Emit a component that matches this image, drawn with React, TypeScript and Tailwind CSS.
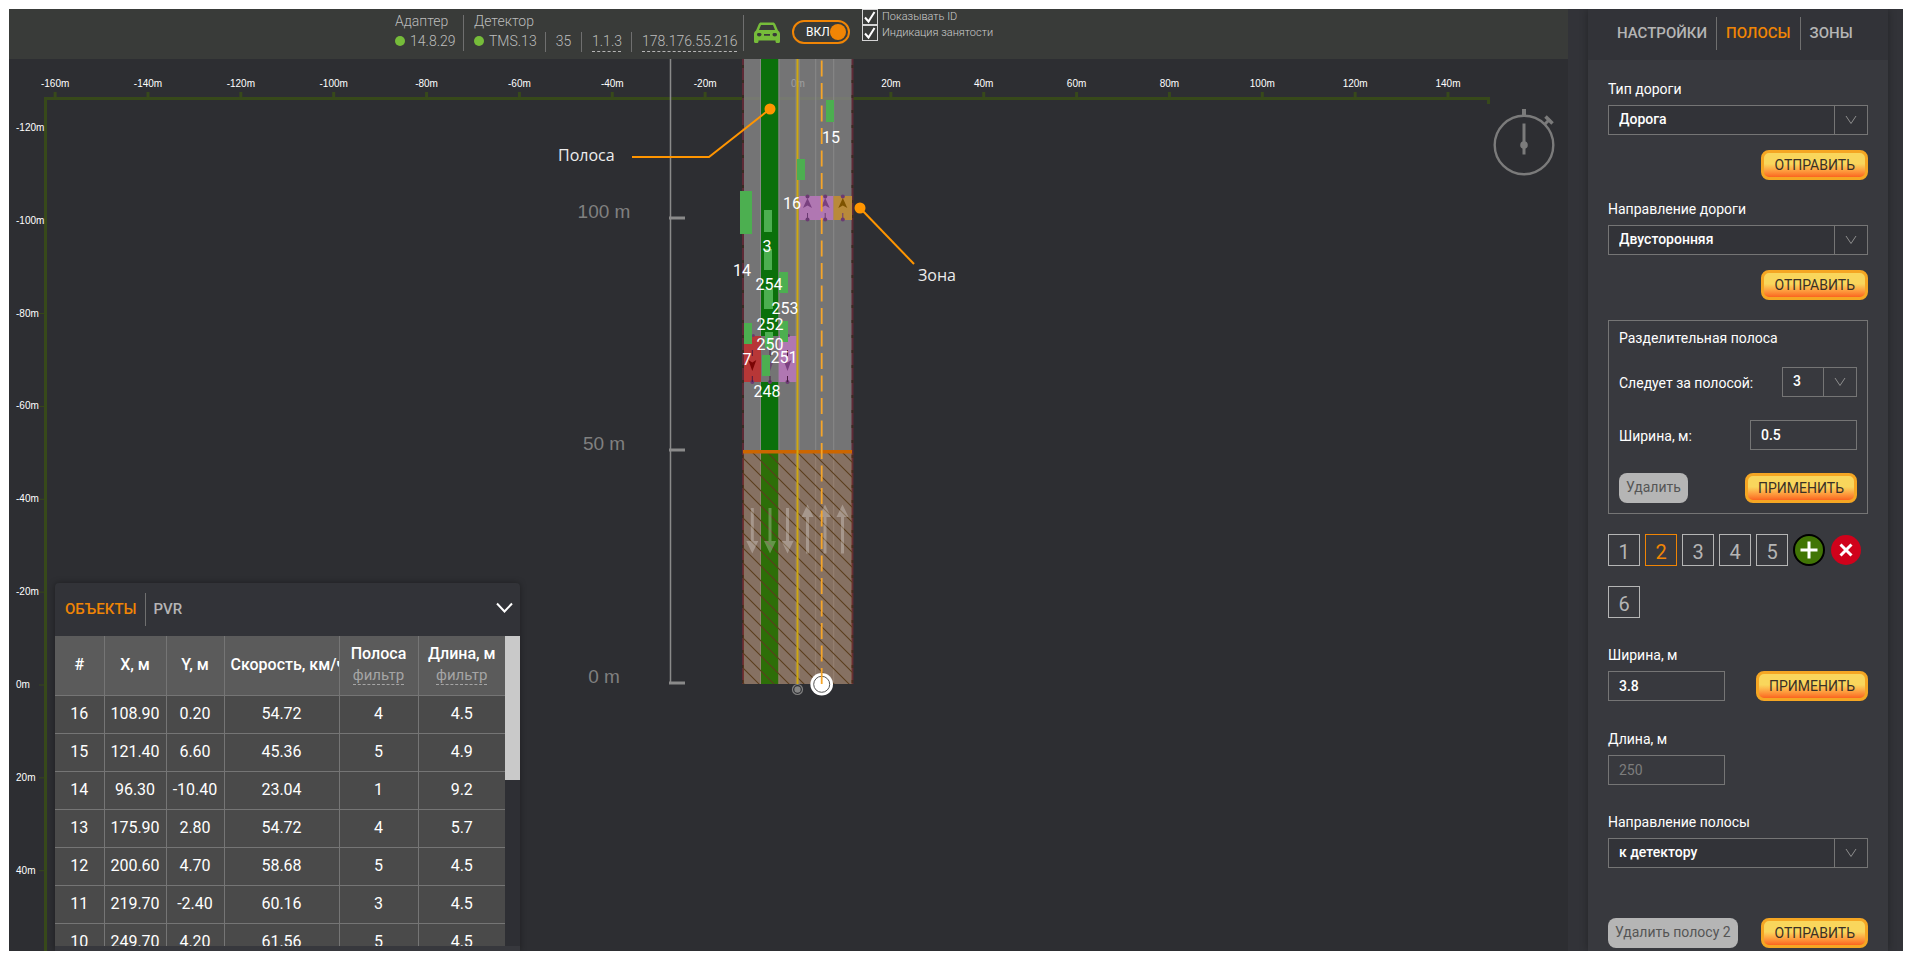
import { useState } from "react";
import type { ReactNode } from "react";

const PX_PER_10M = 46.43;
const ZERO_X = 798;
const ZERO_Y = 685;

const xTicks = [-160, -140, -120, -100, -80, -60, -40, -20, 0, 20, 40, 60, 80, 100, 120, 140];
const yTicks = [-120, -100, -80, -60, -40, -20, 0, 20, 40];

const distances = [
  { label: "100 m", y: 218 },
  { label: "50 m", y: 450 },
  { label: "0 m", y: 683 },
];

// detected vehicles on the road
const vehicles = [
  { x: 826, y: 100, w: 8, h: 22 },
  { x: 797, y: 159, w: 8, h: 21 },
  { x: 740, y: 191, w: 12, h: 43 },
  { x: 764, y: 210, w: 8, h: 22 },
  { x: 764, y: 249, w: 8, h: 21 },
  { x: 779, y: 272, w: 9, h: 21 },
  { x: 764, y: 289, w: 9, h: 20 },
  { x: 744, y: 323, w: 8, h: 21 },
  { x: 765, y: 332, w: 8, h: 16 },
  { x: 780, y: 321, w: 8, h: 21 },
  { x: 762, y: 355, w: 8, h: 21 },
];

const vehicleIds = [
  { id: "15", x: 831, y: 143 },
  { id: "16", x: 792, y: 209 },
  { id: "3", x: 767, y: 252 },
  { id: "14", x: 742, y: 276 },
  { id: "254", x: 769, y: 290 },
  { id: "253", x: 785, y: 314 },
  { id: "252", x: 770, y: 330 },
  { id: "250", x: 770, y: 350 },
  { id: "7", x: 747, y: 365 },
  { id: "251", x: 784, y: 363 },
  { id: "248", x: 767, y: 397 },
];

const rows = [
  ["16", "108.90", "0.20", "54.72", "4", "4.5"],
  ["15", "121.40", "6.60", "45.36", "5", "4.9"],
  ["14", "96.30", "-10.40", "23.04", "1", "9.2"],
  ["13", "175.90", "2.80", "54.72", "4", "5.7"],
  ["12", "200.60", "4.70", "58.68", "5", "4.5"],
  ["11", "219.70", "-2.40", "60.16", "3", "4.5"],
  ["10", "249.70", "4.20", "61.56", "5", "4.5"],
];

const columns = [
  { title: "#", width: "w-[49px]" },
  { title: "X, м", width: "w-[62px]" },
  { title: "Y, м", width: "w-[58px]" },
  { title: "Скорость, км/ч", width: "w-[115px]" },
  { title: "Полоса", width: "w-[79px]", filter: true },
  { title: "Длина, м", width: "w-[87px]", filter: true },
];

function Ruler() {
  return (
    <g>
      <g stroke="#37491a" fill="none">
        <path d="M45.5 960V98.5H1488.5V104" strokeWidth="3" />
        {xTicks.map((m) => (
          <path key={m} d={`M${ZERO_X + (m / 10) * PX_PER_10M} 92v6`} strokeWidth="3" />
        ))}
        {yTicks
          .filter((m) => Math.abs(m) < 100)
          .map((m) => (
            <path key={m} d={`M39 ${ZERO_Y + (m / 10) * PX_PER_10M}h6`} strokeWidth="1" />
          ))}
      </g>
      <g className="fill-white font-['Liberation_Sans',Arial,sans-serif] text-[10px]">
        {xTicks.map((m) => (
          <text key={m} x={ZERO_X + (m / 10) * PX_PER_10M} y="87" textAnchor="middle">
            {m}m
          </text>
        ))}
        {yTicks.map((m) => (
          <text key={m} x="16" y={ZERO_Y + (m / 10) * PX_PER_10M + 3}>
            {m}m
          </text>
        ))}
      </g>
    </g>
  );
}

function ScaleBar() {
  return (
    <g>
      <path d="M670.5 59V683" stroke="#8a8a8a" strokeWidth="1.5" />
      {distances.map((d) => (
        <g key={d.label}>
          <path d={`M669 ${d.y}h16`} stroke="#8a8a8a" strokeWidth="3" />
          <text
            x="604"
            y={d.y}
            textAnchor="middle"
            className="fill-[#808080] font-['Liberation_Sans',Arial,sans-serif] text-[19px]"
          >
            {d.label}
          </text>
        </g>
      ))}
    </g>
  );
}

function Road() {
  return (
    <g>
      <rect x="743" y="50" width="109.5" height="634" fill="#868686" fillOpacity="0.8" />
      <rect x="761" y="50" width="17.5" height="634" fill="#0a700a" />
      <path d="M743 50V684M852.5 50V684" stroke="#5e2a36" strokeWidth="2" />
      <path d="M743 50V684M852.5 50V684" stroke="#3c2a22" strokeWidth="2" strokeDasharray="3 12" />
      <path
        d="M760.5 50V684M779 50V684M796 50V684M799.2 50V684M815.7 50V684M833.7 50V684"
        stroke="#888888"
        strokeWidth="1"
      />

      {/* zones */}
      <rect x="744" y="336" width="17.5" height="46" fill="#b73737" />
      <rect x="761" y="336" width="17.5" height="46" fill="#747474" />
      <rect x="778.5" y="336" width="18" height="46" fill="#b077b2" />
      <rect x="799" y="196" width="34.5" height="24" fill="#b077b2" />
      <rect x="833.5" y="196" width="18.5" height="24" fill="#b98a3a" />
      {[
        { x: 807.5, c: "#7a4080" },
        { x: 825.2, c: "#7a4080" },
        { x: 842.8, c: "#7d5200" },
      ].map((a) => (
        <g key={a.x}>
          <path d={`M${a.x} 198l4.5 10l-4.5 -2.5l-4.5 2.5z`} fill={a.c} />
          <circle cx={a.x} cy="196.5" r="2" fill="#6b3a72" />
          <circle cx={a.x} cy="219.5" r="2" fill="#6b3a72" />
          <path d={`M${a.x} 213v6`} stroke="#6b3a72" />
        </g>
      ))}
      {[
        { x: 752.3, c: "#7a0505" },
        { x: 770, c: "#6b4a72" },
        { x: 787.5, c: "#7a4080" },
      ].map((a) => (
        <g key={a.x}>
          <path d={`M${a.x} 371l4 -11l-4 2.5l-4 -2.5z`} fill={a.c} />
          <circle cx={a.x + 1} cy="335.5" r="1.5" fill="#6b3a72" />
          <circle cx={a.x} cy="382" r="2" fill="#6b3a72" />
          <path d={`M${a.x} 350v6M${a.x} 376v6`} stroke="#4b1a42" />
        </g>
      ))}

      {/* blind area */}
      <rect x="743" y="453" width="109.5" height="231" fill="#e46400" fillOpacity="0.16" />
      <rect x="743" y="453" width="109.5" height="231" fill="url(#hatch)" />
      <path d="M743 451.7H852" stroke="#cc6600" strokeWidth="3.5" />
      <g fill="#ffffff" fillOpacity="0.27">
        {[752.3, 770, 787.5].map((x) => (
          <path key={x} d={`M${x - 1.5} 508h3v33h4.5l-6 12.5l-6 -12.5h4.5z`} />
        ))}
        {[807.5, 825, 842.5].map((x) => (
          <path key={x} d={`M${x - 1.5} 553.5h3v-36.5h4.5l-6 -12.5l-6 12.5h4.5z`} />
        ))}
      </g>

      <path d="M797.5 50V684" stroke="#cfa810" strokeWidth="2" />
      <g fill="#4caf50">
        {vehicles.map((v) => (
          <rect key={`${v.x}-${v.y}`} x={v.x} y={v.y} width={v.w} height={v.h} />
        ))}
      </g>

      <circle cx="797.5" cy="689.5" r="5" fill="#2d2e32" stroke="#808080" strokeWidth="1.2" />
      <circle cx="797.5" cy="689.5" r="3.2" fill="#858585" />
      <circle cx="821.7" cy="684.3" r="11.3" fill="#ffffff" />
      <circle cx="821.7" cy="684.3" r="8" fill="none" stroke="#555555" />
      <path d="M821.7 684V50" stroke="#f5a52a" strokeWidth="1.8" strokeDasharray="16 6.5" />

      <g className="fill-white font-['Roboto',sans-serif] text-base" textAnchor="middle">
        {vehicleIds.map((v) => (
          <text key={v.id} x={v.x} y={v.y}>
            {v.id}
          </text>
        ))}
      </g>
    </g>
  );
}

function RadarMap() {
  return (
    <svg className="absolute inset-0 h-full w-full" role="img" aria-label="Карта">
      <defs>
        <pattern id="hatch" width="15" height="15" patternUnits="userSpaceOnUse">
          <path d="M-1 -1L16 16M-1 14L1 16M14 -1L16 1" stroke="#5a3d1c" strokeWidth="1.1" />
        </pattern>
      </defs>
      <g transform="translate(-9 -59)">
        <Ruler />
        <ScaleBar />
        <Road />
        <g fill="none" stroke="#ff9500" strokeWidth="2">
          <path d="M632 157H709L770 109" />
          <path d="M860 208L914 264" />
        </g>
        <circle cx="770" cy="109" r="5.5" fill="#ff9500" />
        <circle cx="860" cy="208" r="5.5" fill="#ff9500" />
        <g className="fill-[#ececec] font-['Open_Sans','Noto_Sans',sans-serif] text-base">
          <text x="558" y="161">Полоса</text>
          <text x="918" y="281">Зона</text>
        </g>
      </g>
    </svg>
  );
}

function Stopwatch() {
  return (
    <svg
      className="absolute top-[48px] right-3 h-[70px] w-[64px]"
      viewBox="0 0 64 70"
      fill="none"
      stroke="#7b7b7b"
    >
      <circle cx="32" cy="38" r="29.3" strokeWidth="2.4" />
      <path d="M32 2v7" strokeWidth="4" />
      <path d="M32 16.5v31" strokeWidth="3" />
      <circle cx="32" cy="38" r="3.8" fill="#7b7b7b" stroke="none" />
      <path d="M53 17l5 -5" strokeWidth="3" />
      <path d="M53.5 9.5l7 7" strokeWidth="3.5" />
    </svg>
  );
}

function Check({ id, label }: { id: string; label: string }) {
  return (
    <div className="flex h-4 items-center gap-1">
      <span className="relative block h-4 w-4">
        <input
          id={id}
          type="checkbox"
          defaultChecked
          className="peer block h-4 w-4 appearance-none border border-[#d5d5d5]"
        />
        <svg
          className="pointer-events-none absolute inset-0 hidden h-4 w-4 peer-checked:block"
          viewBox="0 0 16 16"
          fill="none"
          stroke="#ffffff"
          strokeWidth="2"
        >
          <path d="M3 8.5L6.5 12.5L12.5 3" />
        </svg>
      </span>
      <label htmlFor={id} className="text-[11px] leading-4 font-light text-[#cccccc]">
        {label}
      </label>
    </div>
  );
}

function TopBar() {
  return (
    <header className="flex h-[50px] shrink-0 items-start bg-[#393b39] pl-[386px] text-sm font-light text-[#bdbdbd]">
      <div className="mt-1.5 h-9 w-[69px] border-r border-[#6f6f6f]">
        <div className="leading-3">Адаптер</div>
        <div className="mt-[5px] flex items-center gap-[5px] leading-[18px]">
          <span className="h-2.5 w-2.5 rounded-full bg-[#76bc3a]" />
          14.8.29
        </div>
      </div>
      <div className="mt-1.5 h-9 w-[280px] border-r border-[#6f6f6f] pl-2.5">
        <div className="leading-3">Детектор</div>
        <div className="mt-[5px] flex h-5 leading-[18px]">
          <span className="flex h-5 w-[72px] items-center gap-[5px] border-r border-[#6f6f6f] pb-0.5">
            <span className="h-2.5 w-2.5 rounded-full bg-[#76bc3a]" />
            TMS.13
          </span>
          <span className="w-9 border-r border-[#6f6f6f] text-center">35</span>
          <span className="w-[50px] border-r border-[#6f6f6f] px-2.5">
            <a href="#firmware" className="block h-5 border-b border-dashed border-[#b5b5b5]">
              1.1.3
            </a>
          </span>
          <a href="#address" className="ml-2.5 h-5 border-b border-dashed border-[#b5b5b5]">
            178.176.55.216
          </a>
        </div>
      </div>
      <svg className="mt-3 ml-2.5 h-[23px] w-[26px]" viewBox="0 0 26 23" fill="#76bc3a">
        <path
          fillRule="evenodd"
          d="M7 1.5h12c1 0 1.8.6 2.2 1.6L24 9.5c1.2.8 2 2 2 3.5v7.500c0 .9-.6 1.500-1.500 1.500H23c-.9 0-1.500-.6-1.500-1.500V19.500h-17V20.500c0 .9-.6 1.500-1.500 1.500H1.500C.6 22 0 21.400 0 20.500V13c0-1.500.8-2.700 2-3.500L4.800 3.100C5.200 2.100 6 1.500 7 1.500zM7 4L5 9h16L19 4zM3 13.500c0 1.200 1 2 2.200 2s2.300-.8 2.300-2-1-1.500-2.300-1.500S3 12.300 3 13.500zM18.500 13.500c0 1.200 1 2 2.300 2s2.200-.8 2.200-2-1-1.500-2.200-1.500-2.300.3-2.300 1.500zM10 13h6v1.800h-6z"
        />
      </svg>
      <button
        type="button"
        className="mt-[11px] ml-3 flex h-6 w-[58px] items-center justify-between rounded-full border-2 border-[#f08505] pr-0.5 pl-3 text-xs font-normal text-white"
      >
        ВКЛ
        <span className="h-4 w-4 shrink-0 rounded-full bg-[#f08505]" />
      </button>
      <div className="ml-3">
        <Check id="show-id" label="Показывать ID" />
        <Check id="show-busy" label="Индикация занятости" />
      </div>
    </header>
  );
}

function ObjectsPanel() {
  return (
    <section className="absolute bottom-0 left-[46px] w-[465px] overflow-hidden rounded-t bg-[#323338] shadow-[0_0_6px_rgba(0,0,0,0.35)]">
      <div className="flex h-[53px] items-center px-2.5 text-[15px] font-medium">
        <button type="button" className="text-[#f08505]">ОБЪЕКТЫ</button>
        <span className="mx-2 h-[33px] w-px bg-[#6f6f6f]" />
        <button type="button" className="text-[#b5b5b5]">PVR</button>
        <button type="button" aria-label="Свернуть" className="mr-[-3px] mb-1 ml-auto">
          <svg width="17" height="12" viewBox="0 0 17 12" fill="none" stroke="#ffffff" strokeWidth="2">
            <path d="M1 1.500L8.500 9.500L16 1.500" />
          </svg>
        </button>
      </div>
      <div className="flex h-[310px] overflow-hidden">
        <table className="w-[450px] table-fixed border-collapse self-start text-center text-base text-white">
          <thead>
            <tr className="h-[59px] bg-[#5b5b5b]">
              {columns.map((c) => (
                <th
                  key={c.title}
                  className={`${c.width} overflow-hidden border-r border-b border-[#757575] p-0 font-medium whitespace-nowrap last:border-r-0`}
                >
                  {c.filter ? (
                    <>
                      <span className="block leading-[19px]">{c.title}</span>
                      <a
                        href="#filter"
                        className="inline-block border-b border-dashed border-[#a5a5a5] text-[15px] leading-[18px] font-normal text-[#a5a5a5]"
                      >
                        фильтр
                      </a>
                    </>
                  ) : (
                    <span className={c.title.length > 8 ? "block pl-1.5 text-left" : "block"}>{c.title}</span>
                  )}
                </th>
              ))}
            </tr>
          </thead>
          <tbody>
            {rows.map((row) => (
              <tr key={row[0]} className="h-[38px] bg-[#4a4a4a]">
                {row.map((cell, i) => (
                  <td key={i} className="border-r border-b border-[#757575] p-0 last:border-r-0">
                    {cell}
                  </td>
                ))}
              </tr>
            ))}
          </tbody>
        </table>
        <div className="w-[15px] bg-[#2e2f34]">
          <div className="h-36 bg-[#c9c9c9]" />
        </div>
      </div>
      <div className="h-[5px] bg-[#37383d]" />
    </section>
  );
}

function Label({ htmlFor, children }: { htmlFor: string; children: ReactNode }) {
  return (
    <label htmlFor={htmlFor} className="mb-1.5 block h-5 leading-5">
      {children}
    </label>
  );
}

function Select({ id, options, className = "" }: { id: string; options: string[]; className?: string }) {
  return (
    <div className={`relative flex h-[30px] border border-[#757575] ${className}`}>
      <select id={id} className="w-full appearance-none pr-9 pb-0.5 pl-2.5 font-medium outline-none">
        {options.map((o) => (
          <option key={o}>{o}</option>
        ))}
      </select>
      <span className="pointer-events-none absolute inset-y-0 right-0 flex w-[33px] items-center justify-center border-l border-[#757575]">
        <svg width="12" height="10" viewBox="0 0 12 10" fill="none" stroke="#8e8e8e">
          <path d="M1 1L6 8.500L11 1" />
        </svg>
      </span>
    </div>
  );
}

function OrangeButton({ children }: { children: ReactNode }) {
  return (
    <button
      type="button"
      className="h-[30px] rounded-[8px] border-[3px] border-[#f5a623] bg-linear-to-b from-[#f9d65c] from-45% to-[#fa6420] px-2.5 leading-[22px] text-[#3a3026]"
    >
      {children}
    </button>
  );
}

function GrayButton({ children }: { children: ReactNode }) {
  return (
    <button type="button" className="h-[30px] rounded-[8px] bg-[#b5b5b5] px-[7px] pb-0.5 text-[#555555]">
      {children}
    </button>
  );
}

const inputClass = "h-[30px] border border-[#757575] px-2.5 font-medium outline-none";

function Sidebar() {
  const [lane, setLane] = useState(2);

  return (
    <aside className="w-[300px] shrink-0 overflow-hidden bg-[#38393e] text-sm text-white shadow-[0_0_8px_rgba(0,0,0,0.3)]">
      <nav className="flex h-[51px] items-center bg-[#323338] pb-0.5 pl-5 text-[15px] font-medium text-[#b5b5b5]">
        <button type="button" className="px-[9px]">НАСТРОЙКИ</button>
        <button type="button" className="h-[33px] border-x border-[#6f6f6f] px-[9px] text-[#f08505]">
          ПОЛОСЫ
        </button>
        <button type="button" className="px-[9px]">ЗОНЫ</button>
      </nav>

      <form className="px-5 pt-[19px]">
        <Label htmlFor="road-type">Тип дороги</Label>
        <Select id="road-type" options={["Дорога", "Перекрёсток"]} className="bg-[#323338]" />
        <div className="mt-[15px] mb-[19px] flex justify-end">
          <OrangeButton>ОТПРАВИТЬ</OrangeButton>
        </div>

        <Label htmlFor="road-direction">Направление дороги</Label>
        <Select id="road-direction" options={["Двусторонняя", "Односторонняя"]} className="bg-[#323338]" />
        <div className="mt-[15px] flex justify-end">
          <OrangeButton>ОТПРАВИТЬ</OrangeButton>
        </div>

        <fieldset className="mt-5 border border-[#757575] px-2.5 pt-[7px] pb-2.5">
          <div className="mb-[19px] leading-5">Разделительная полоса</div>
          <div className="mb-[23px] flex items-center justify-between">
            <label htmlFor="median-lane" className="pt-0.5">Следует за полосой:</label>
            <Select id="median-lane" options={["3", "1", "2", "4", "5"]} className="w-[75px]" />
          </div>
          <div className="mb-[23px] flex items-center justify-between">
            <label htmlFor="median-width" className="pt-0.5">Ширина, м:</label>
            <input id="median-width" defaultValue="0.5" className={`${inputClass} w-[107px]`} />
          </div>
          <div className="flex justify-between">
            <GrayButton>Удалить</GrayButton>
            <OrangeButton>ПРИМЕНИТЬ</OrangeButton>
          </div>
        </fieldset>

        <div className="mt-5 flex flex-wrap items-center gap-x-[5px] gap-y-5 text-[20px]">
          {[1, 2, 3, 4, 5].map((n) => (
            <button
              key={n}
              type="button"
              onClick={() => setLane(n)}
              className={`h-8 w-8 border pt-1 leading-[26px] ${
                lane === n ? "border-[#f08505] text-[#f08505]" : "border-[#b5b5b5] text-[#b5b5b5]"
              }`}
            >
              {n}
            </button>
          ))}
          <button type="button" aria-label="Добавить полосу">
            <svg width="32" height="32" viewBox="0 0 32 32" stroke="#ffffff">
              <circle cx="16" cy="16" r="15" fill="#417505" stroke="#000000" strokeWidth="2" />
              <path d="M7.500 16h17M16 7.500v17" strokeWidth="3" />
            </svg>
          </button>
          <button type="button" aria-label="Удалить полосу">
            <svg width="32" height="32" viewBox="0 0 32 32" stroke="#ffffff">
              <circle cx="16" cy="16" r="15" fill="#d0021b" stroke="none" />
              <path d="M10.500 10.500l11 11M21.500 10.500l-11 11" strokeWidth="3" />
            </svg>
          </button>
          <button
            type="button"
            onClick={() => setLane(6)}
            className={`h-8 w-8 border pt-1 leading-[26px] ${
              lane === 6 ? "border-[#f08505] text-[#f08505]" : "border-[#b5b5b5] text-[#b5b5b5]"
            }`}
          >
            6
          </button>
        </div>

        <div className="mt-[27px]">
          <Label htmlFor="lane-width">Ширина, м</Label>
          <div className="flex justify-between">
            <input id="lane-width" defaultValue="3.8" className={`${inputClass} w-[117px]`} />
            <OrangeButton>ПРИМЕНИТЬ</OrangeButton>
          </div>
        </div>

        <div className="mt-7">
          <Label htmlFor="lane-length">Длина, м</Label>
          <input
            id="lane-length"
            defaultValue="250"
            disabled
            className="block h-[30px] w-[117px] border border-[#757575] px-2.5 text-[#7d7d7d]"
          />
        </div>

        <div className="mt-[27px]">
          <Label htmlFor="lane-direction">Направление полосы</Label>
          <Select id="lane-direction" options={["к детектору", "от детектора"]} className="bg-[#323338]" />
        </div>

        <div className="mt-[50px] flex justify-between">
          <GrayButton>Удалить полосу {lane}</GrayButton>
          <OrangeButton>ОТПРАВИТЬ</OrangeButton>
        </div>
      </form>
    </aside>
  );
}

export default function App() {
  return (
    <div className="h-screen bg-white pt-[9px] pr-2 pb-2.5 pl-[9px] font-['Roboto','Liberation_Sans',sans-serif]">
      <div className="flex h-full overflow-hidden bg-[#323338] pr-[15px]">
        <main className="mr-5 flex min-w-0 flex-1 flex-col">
          <TopBar />
          <div className="relative flex-1 overflow-hidden bg-[#2d2e32]">
            <RadarMap />
            <Stopwatch />
            <ObjectsPanel />
          </div>
        </main>
        <Sidebar />
      </div>
    </div>
  );
}
